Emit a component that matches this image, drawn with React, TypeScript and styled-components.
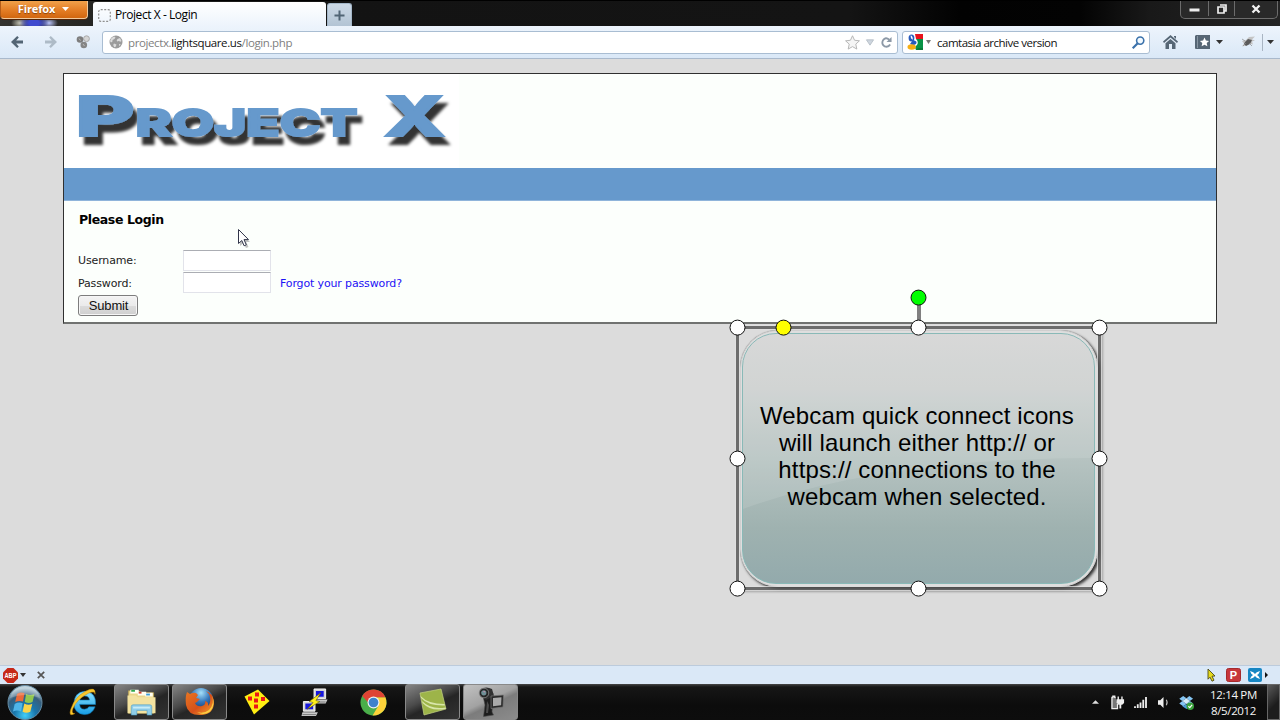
import React from "react";
import styled, { createGlobalStyle, css } from "styled-components";

const uiFont = `"Open Sans", "Noto Sans", sans-serif`;
const pageFont = `"DejaVu Sans", Verdana, sans-serif`;

const GlobalStyle = createGlobalStyle`
  * { box-sizing: border-box; }
  body { margin: 0; background: #dcdcdc; overflow: hidden; }
  svg { display: block; flex: none; overflow: visible; }
`;

const Desktop = styled.div`
  position: relative;
  display: flex;
  flex-direction: column;
  width: 1280px;
  height: 720px;
  overflow: hidden;
`;

/* ---------- Title bar ---------- */
const TitleBar = styled.header`
  display: flex;
  align-items: flex-start;
  height: 26px;
  background:
    radial-gradient(ellipse 15px 9px at 34px 22px, #3f4bcf 35%, transparent 100%),
    radial-gradient(ellipse 9px 6px at 20px 22px, #b9b9a9 10%, transparent 100%),
    radial-gradient(ellipse 9px 6px at 49px 22px, #aab4e6 10%, transparent 100%),
    linear-gradient(90deg, #34332f 0, #262623 90px, #131313 330px, #141414 850px, #020202 960px, #030303 1080px, #191919 1150px, #242424 1280px);
  border-top: 1px solid #000;
`;

const FirefoxButton = styled.button`
  display: flex;
  align-items: center;
  justify-content: center;
  gap: 7px;
  width: 88px;
  height: 18px;
  padding: 0 1px 2px 0;
  border: 1px solid #f1c99c;
  border-top: 0;
  border-left-color: #b45c17;
  border-radius: 0 0 4px 4px;
  background: linear-gradient(#f0a14b, #e37d25 55%, #d2660f);
  box-shadow: 0 1px 0 #4f2409;
  color: #fff;
  font: 700 11px/15px ${uiFont};
  letter-spacing: -0.15px;
  text-shadow: 0 1px 1px #8a4107;
`;

const Tab = styled.div`
  display: flex;
  align-items: center;
  width: 233px;
  height: 24px;
  margin: 1px 0 0 5px;
  padding: 2px 0 0 5px;
  gap: 4px;
  border-radius: 3px 3px 0 0;
  background: linear-gradient(#fff, #edf4fc);
  font: 12px/20px ${uiFont};
  letter-spacing: -0.44px;
  color: #000;
`;

const NewTab = styled.div`
  display: flex;
  align-items: center;
  justify-content: center;
  width: 25px;
  height: 23px;
  margin: 2px 0 0 1px;
  border: 1px solid #a4b7c9;
  border-bottom: 0;
  border-radius: 3px 3px 0 0;
  background: linear-gradient(#ccd9e6, #b3c4d4);
`;

const WindowControls = styled.div`
  display: flex;
  width: 98px;
  height: 18px;
  margin: 0 2px 0 auto;
  padding-bottom: 2px;
  border: 1px solid #6c6c6c;
  border-top: 0;
  border-radius: 0 0 5px 5px;
  background: #292929;
`;

const Control = styled.div<{ $w: number }>`
  display: flex;
  align-items: center;
  justify-content: center;
  width: ${(p) => p.$w}px;
  & + & { border-left: 1px solid #6c6c6c; }
`;

/* ---------- Navigation toolbar ---------- */
const NavBar = styled.nav`
  display: flex;
  align-items: center;
  height: 33px;
  background: linear-gradient(#edf4fc, #dae8f7);
  border-bottom: 1px solid #a9b9cc;
`;

const Slot = styled.div<{ $w: number }>`
  display: flex;
  align-items: center;
  justify-content: center;
  width: ${(p) => p.$w}px;
  height: 24px;
`;

const Field = styled.div<{ $w: number; $gap?: number }>`
  display: flex;
  align-items: center;
  width: ${(p) => p.$w}px;
  height: 23px;
  margin-right: ${(p) => p.$gap ?? 0}px;
  border: 1px solid #a9bdd2;
  border-radius: 3px;
  background: #fff;
  white-space: nowrap;
`;

const Address = styled.span`
  flex: 1;
  padding-top: 2px;
  font: 11.5px/20px ${uiFont};
  letter-spacing: -0.39px;
  color: #808080;
  b { color: #111; font-weight: 400; }
`;

const Query = styled.span`
  flex: 1;
  padding: 2px 0 0 6px;
  font: 11.5px/20px ${uiFont};
  letter-spacing: -0.49px;
  color: #111;
`;

const Divider = styled.div`
  width: 1px;
  height: 17px;
  background: #a9b5c3;
`;

/* ---------- Page ---------- */
const Viewport = styled.main`
  height: 606px;
  padding: 14px 63px 0;
  background: #dcdcdc;
`;

const Site = styled.section`
  width: 1154px;
  height: 251px;
  border: 1px solid #303030;
  border-bottom: 2px solid #707270;
  background: #fcfffc;
`;

const Masthead = styled.div`
  width: 395px;
  height: 94px;
  background: #fff;
`;

const BlueBand = styled.div`
  height: 33px;
  background: #6699cc;
  border-bottom: 1px solid #8fb4da;
`;

const LoginForm = styled.div`
  padding: 11px 0 0 14px;
  font: 11px/16px ${pageFont};
  letter-spacing: -0.14px;
  color: #222;
`;

const Heading = styled.h1`
  margin: 0 0 21px 1px;
  font: bold 12.5px/16px ${pageFont};
  letter-spacing: -0.38px;
  color: #000;
`;

const FormRow = styled.div`
  display: flex;
  align-items: center;
  height: 22.5px;
`;

const Label = styled.label`
  width: 104.5px;
  padding-top: 2px;
`;

const Input = styled.input`
  width: 88px;
  height: 21px;
  padding: 0;
  border: 1px solid #e2e3ea;
  border-top-color: #abadb3;
  background: #fff;
`;

const ForgotLink = styled.a`
  margin-left: 9.5px;
  padding-top: 2px;
  color: #1c12f5;
`;

const Submit = styled.button`
  display: block;
  width: 60px;
  height: 21px;
  margin: 1px 0 0;
  padding: 1px 0 0 1px;
  border: 1px solid #7d7d7d;
  border-radius: 3px;
  background: linear-gradient(#f3f3f3, #ebebeb 50%, #dcdcdc 51%, #cfcfcf);
  box-shadow: inset 0 0 0 1px #f6f6f6;
  font: 13px/18px "Liberation Sans", Arial, sans-serif;
  letter-spacing: -0.15px;
  color: #111;
`;

const Pointer = styled.div`
  position: absolute;
  left: 237px;
  top: 228px;
`;

/* ---------- Callout annotation ---------- */
const Callout = styled.div`
  position: absolute;
  left: 736px;
  top: 326px;
  width: 365px;
  height: 264px;
`;

const Plate = styled.div`
  position: absolute;
  inset: 4px 3px 3px 4px;
  border: 1px solid #cfcfcf;
  border-radius: 38px;
  background: #dedede;
  box-shadow: 2px 2px 3px #333, 0 0 1px #777;
`;

const Glass = styled.div`
  position: absolute;
  inset: 7px 6px 6px;
  display: flex;
  flex-direction: column;
  justify-content: center;
  overflow: hidden;
  border: 1px solid #89b9b7;
  border-radius: 34px;
  background: linear-gradient(#d4d4d4, #ccd0cf 22%, #b6c3c1 50%, #9fb2b0 78%, #93aaac);
`;

const Sheen = styled.svg`
  position: absolute;
  left: 0;
  top: 0;
`;

const Message = styled.p`
  position: relative;
  margin: 0;
  padding: 0 3px 6px 0;
  font: 24px/27px "Liberation Sans", Arial, sans-serif;
  letter-spacing: 0.14px;
  text-align: center;
  white-space: pre;
  color: #000;
`;

const Selection = styled.div`
  position: absolute;
  inset: 0;
  border: 3px solid rgba(80, 80, 80, 0.8);
  box-shadow: 0 0 0 1px rgba(225, 225, 225, 0.75), inset 0 0 0 1px rgba(225, 225, 225, 0.75),
    2px 2px 2px rgba(60, 60, 60, 0.35);
`;

const Stem = styled.div`
  position: absolute;
  left: 181px;
  top: -22px;
  width: 4px;
  height: 24px;
  background: #808080;
`;

const Handle = styled.div<{ $x: number; $y: number; $fill?: string }>`
  position: absolute;
  left: ${(p) => p.$x - 8}px;
  top: ${(p) => p.$y - 8}px;
  width: 16px;
  height: 16px;
  border: 1.4px solid #111;
  border-radius: 50%;
  background: ${(p) => p.$fill ?? "#fff"};
  transform: translate(-0.5px, -0.4px);
`;

/* ---------- Add-on bar ---------- */
const AddonBar = styled.div`
  display: flex;
  align-items: center;
  height: 19px;
  background: #dae8f7;
  border-top: 1px solid #bccbdc;
`;

const Spacer = styled.div`
  flex: 1;
`;

/* ---------- Taskbar ---------- */
const Taskbar = styled.footer`
  display: flex;
  height: 36px;
  background: linear-gradient(#4a4a4a 0, #333 1px, #161616 3px, #0c0c0c 60%, #0d0d0d);
`;

const TaskItem = styled.div<{ $w: number; $state?: "open" | "active" }>`
  display: flex;
  align-items: center;
  justify-content: center;
  width: ${(p) => p.$w}px;
  height: 36px;
  ${(p) =>
    p.$state &&
    css`
      margin-right: 3px;
      border: 1px solid #898989;
      border-radius: 3px;
      background: ${p.$state === "active"
        ? "linear-gradient(155deg, #c2c2c2, #a2a2a2 45%, #7c7c7c 56%, #8c8c8c)"
        : "linear-gradient(155deg, #858585, #4a4a4a 40%, #252525 56%, #333)"};
    `}
`;

const Clock = styled.div`
  width: 67px;
  padding-top: 3px;
  text-align: center;
  font: 11.5px/16px ${uiFont};
  letter-spacing: -0.35px;
  color: #f5f5f5;
  white-space: nowrap;
`;

const ShowDesktop = styled.div`
  width: 13px;
  border: 1px solid #676767;
  background: linear-gradient(135deg, #5a5a5a, #1d1d1d 60%);
`;

const Caret = ({ color = "#333", size = 7 }: { color?: string; size?: number }) => (
  <svg width={size} height={4} viewBox="0 0 8 4" preserveAspectRatio="none">
    <path d="M0 0h8L4 4z" fill={color} />
  </svg>
);

const Logo = () => (
  <svg width="395" height="94" viewBox="64 74 395 94">
    <defs>
      <filter id="logoShadow" x="-5%" y="-20%" width="110%" height="150%">
        <feDropShadow dx="5" dy="8" stdDeviation="1.5" floodColor="#000" floodOpacity=".8" />
      </filter>
    </defs>
    <g
      filter="url(#logoShadow)"
      fill="#6699cc"
      stroke="#6699cc"
      strokeWidth="2"
      strokeLinejoin="miter"
      fontFamily="Inter, 'Liberation Sans', sans-serif"
      fontWeight="800"
    >
      <text x="75.500" y="136" fontSize="54.500" textLength="59" lengthAdjust="spacingAndGlyphs">P</text>
      <text x="135.500" y="136" fontSize="37.500" textLength="222" lengthAdjust="spacingAndGlyphs">ROJECT</text>
      <text x="384" y="136" fontSize="54.500" textLength="61" lengthAdjust="spacingAndGlyphs">X</text>
    </g>
  </svg>
);

const Arrow = ({ color, flip }: { color: string; flip?: boolean }) => (
  <svg width="12" height="12" viewBox="0 0 12 12">
    <g transform={flip ? "translate(12 0) scale(-1 1)" : undefined}>
      <path d="M6.200 0L7.800 1.600 5.200 4.400H12v3.200H5.200l2.600 2.800L6.200 12 0 6z" fill={color} />
    </g>
  </svg>
);

const Globe = () => (
  <svg width="14" height="14" viewBox="0 0 14 14">
    <circle cx="7" cy="7" r="6.500" fill="#9b9b9b" />
    <path d="M2.500 3l2.500-1.500 1.500.8-1 1.700-2 1v1.500L2 7.500 1 6zM8.500 4l2.500-1 1.500 3-1 .7-1.700-.7-1.600.5-.5-1zM5 8.500l2.500 1-.8 2.200-1.500.5L4.200 10zM10 9l1.800.2-1.800 2z" fill="#dcdcdc" />
  </svg>
);

const GoogleIcon = () => (
  <svg width="16" height="16" viewBox="0 0 16 16">
    <path d="M8 0h8v5H9z" fill="#e8121c" />
    <path d="M9 5h7v11H9q-2-3 1-5 2-3-1-6z" fill="#089246" />
    <path d="M9 16l2-2h5v2z" fill="#0a7a38" />
    <ellipse cx="4.500" cy="4" rx="2.900" ry="3.600" fill="#2659bd" />
    <path d="M6 6q5 1 3 4-3 2-6 0z" fill="#2659bd" />
    <path d="M3.700 1.200q2.500 1 2 4.500-2.300-1-2-4.500z" fill="#fff" />
    <ellipse cx="4.700" cy="13" rx="4.200" ry="2.800" fill="#f6ae13" />
  </svg>
);

const Tray = {
  plug: (
    <svg width="14" height="15" viewBox="0 0 15 15">
      <path d="M5 2H4V.8H2V2H1v12h6V9" fill="#777" stroke="#eee" strokeWidth="1.400" />
      <path d="M6 4h8v4l-2 2h-1v4H9v-4H8L6 8zM7 1h1.500v3H7zM11 1h1.500v3H11z" fill="#eee" />
    </svg>
  ),
  signal: (
    <svg width="13" height="11" viewBox="0 0 14 12">
      <path d="M0 10h2v2H0zM3 8h2v4H3zM6 6h2v6H6zM9 3h2v9H9zM12 0h2v12h-2z" fill="#eee" />
    </svg>
  ),
  speaker: (
    <svg width="11" height="13" viewBox="0 0 12 14">
      <path d="M0 4.500h2.500L6 1v12L2.500 9.500H0z" fill="#eee" />
      <path d="M9 4q2 3 0 6" stroke="#bbb" fill="none" strokeWidth="1.200" />
    </svg>
  ),
  dropbox: (
    <svg width="15" height="15" viewBox="0 0 16 16">
      <path d="M4.500 1L8 3.500 3.500 6.500.3 4zM11 1l4 3-3.500 2.500L8 3.500zM3.500 6.500L8 9.500 4.500 12 .3 9zM11.500 6.500l3.700 2.500L11 12 8 9.500z" fill="#84c5f3" />
      <path d="M8 3.500l3.500 3L8 9.500l-4.500-3z" fill="#d7eefc" />
      <path d="M3.500 12L8 10l3 2.500L8 15z" fill="#4d9edb" />
      <circle cx="12" cy="12" r="4" fill="#3aa23b" />
      <path d="M10 12l1.500 1.500L14 10.500" stroke="#fff" fill="none" strokeWidth="1.200" />
    </svg>
  ),
};

const StartOrb = () => (
  <svg width="38" height="36" viewBox="0 0 38 36">
    <defs>
      <radialGradient id="orb" cx="50%" cy="88%" r="80%">
        <stop offset="0" stopColor="#42cef8" />
        <stop offset=".4" stopColor="#1976ac" />
        <stop offset=".75" stopColor="#365e7c" />
        <stop offset="1" stopColor="#b1c9d5" />
      </radialGradient>
    </defs>
    <circle cx="19" cy="18.500" r="17" fill="url(#orb)" stroke="#668da5" />
    <path d="M11 10q4-2.500 7.500-.7L17 17.500q-4-1.500-7.800.6z" fill="#e9693a" />
    <path d="M20 10q4 2 8.500 0l-2 8q-3.500 2-7.700 0z" fill="#91c750" />
    <path d="M8.700 20q4-2.500 8-.8L15 27.500q-4-2-8 0z" fill="#4fb5e9" />
    <path d="M18.300 19.500q4 2.200 8 .3l-2 8q-4 2-7.700 0z" fill="#fad449" />
    <path d="M4 14Q8 2 19 2t15 12q-15-6-30 0z" fill="#fff" opacity=".22" />
  </svg>
);

const IeIcon = () => (
  <svg width="29" height="30" viewBox="0 0 30 30">
    <defs>
      <linearGradient id="ie" x1="0" y1="0" x2="0" y2="1">
        <stop stopColor="#8fe3ff" />
        <stop offset="1" stopColor="#169de5" />
      </linearGradient>
    </defs>
    <path d="M27.500 17.500H11q.5 5 5 5 3.500 0 4.500-2.500h6.500Q24 28 16 28 5 27 5 16 6 5 16 4q12 .5 11.500 13.500zM11.200 13h10q-.5-4.200-5-4.200t-5 4.200z" fill="url(#ie)" stroke="#0c7dbb" strokeWidth=".6" />
    <path d="M6 27Q-1 31 2 22 6 10 17 4q11-6 10 3 0-4-7-1Q8 12 4 22q-2 5 2 5z" fill="#f9c72c" stroke="#c48d09" strokeWidth=".5" />
  </svg>
);

const ExplorerIcon = () => (
  <svg width="31" height="28" viewBox="0 0 32 30">
    <path d="M2 3h11l2 2h14v22H2z" fill="#ead68a" stroke="#b89f4f" strokeWidth=".7" />
    <path d="M4 2h9v4H4zM12 4h9v4h-9zM20 5h8v4h-8z" fill="#fffef2" />
    <path d="M5 2h4v2H5z" fill="#2fa84c" />
    <path d="M13 4h3v2h-3z" fill="#d0402f" />
    <path d="M21 6h4v2h-4z" fill="#3d9dd8" />
    <path d="M1 8h9l2 2h19v17H1z" fill="#f3e2a0" />
    <path d="M5 29V20q0-2 2-2h18q2 0 2 2v9h-5v-5H11v5z" fill="#8fcde9" stroke="#4a98c0" strokeWidth=".6" />
    <path d="M7 20h18v2H7z" fill="#c7ecf8" />
  </svg>
);

const FirefoxIcon = () => (
  <svg width="30" height="30" viewBox="0 0 30 30">
    <defs>
      <radialGradient id="fxGlobe" cx="50%" cy="20%" r="75%">
        <stop stopColor="#a5e0fa" />
        <stop offset=".5" stopColor="#3677bb" />
        <stop offset="1" stopColor="#15325f" />
      </radialGradient>
      <linearGradient id="fox" x1="0" y1="0" x2="1" y2="1">
        <stop stopColor="#e87722" />
        <stop offset=".55" stopColor="#d7511a" />
        <stop offset="1" stopColor="#f5a62f" />
      </linearGradient>
    </defs>
    <circle cx="16" cy="13" r="12" fill="url(#fxGlobe)" />
    <path d="M2 5l3 2q3-2 6-1l2 2-2 3 4 1-3 3-2 1q2 4 7 3 4-1 3-5 4 1 3 5 3-3 2-9-1-4-4-6 7 2 8 11 0 12-12 13Q3 29 1 18 0 10 2 5z" fill="url(#fox)" />
    <path d="M27 8q3 9-3 15-5 4-12 2 7 4 13-.5Q31 18 27 8z" fill="#fad143" />
  </svg>
);

const DiceIcon = () => (
  <svg width="26" height="26" viewBox="0 0 26 26">
    <path d="M0.500 7.500L14 .5 25.500 12 10 25.500z" fill="#ffee12" />
    <path d="M11 3.500h4v4h-4zM4 7.500h4v4H4zM17 8h4v4h-4zM10 9.500h4v4h-4zM10 15.500h4v4h-4z" fill="#eb1717" />
  </svg>
);

const PuttyIcon = () => (
  <svg width="28" height="29" viewBox="0 0 28 30">
    <path d="M13 1h12v10H13zM2 14h12v10H2z" fill="#d3d3d3" stroke="#f5f5f5" />
    <path d="M15 3h8v6h-8zM4 16h8v6H4z" fill="#1717df" />
    <path d="M13 12h14l-2 4H14zM1 25h16l-2 4H0z" fill="#c9c9c9" />
    <path d="M14 14.500h11M1 27.500h14" stroke="#777" />
    <path d="M20 5L8 14l4 1-6 7 13-8-4-1z" fill="#ffee1b" stroke="#5d5700" strokeWidth=".6" />
  </svg>
);

const ChromeIcon = () => (
  <svg width="27" height="27" viewBox="0 0 28 28">
    <circle cx="14" cy="14" r="13.500" fill="#4aae4a" />
    <path d="M14 8.500h12.300A13.500 13.500 0 0113 27.500l6-10z" fill="#fcd23a" />
    <path d="M2.300 7.300A13.500 13.500 0 0126.300 8.500H14q-4 .5-5.500 5.500z" fill="#df4334" />
    <circle cx="14" cy="14" r="6.200" fill="#f2f2f2" />
    <circle cx="14" cy="14" r="5" fill="#3d82cc" />
  </svg>
);

const CamtasiaIcon = () => (
  <svg width="28" height="28" viewBox="0 0 28 28">
    <path d="M1 5L22 1l5 20-22 6z" fill="#9db449" stroke="#c4d384" strokeWidth=".7" />
    <path d="M1.500 8Q9 16 25.500 16l.4 1.500Q9 18 2.200 10zM3 13q9 9 23.500 6.500l.3 1.200Q12 24 3.600 15z" fill="#dfebb5" opacity=".9" />
  </svg>
);

const CamcorderIcon = () => (
  <svg width="26" height="30" viewBox="0 0 26 30">
    <path d="M5 9l10-3-1 19 1.500 3-10 1.500L7 18z" fill="#1d1d1d" stroke="#4a4a4a" strokeWidth=".6" />
    <path d="M3 2q5-3 11 0l2 7-8 4-5-4z" fill="#303030" />
    <circle cx="6" cy="6" r="4.800" fill="#252525" stroke="#8b8b8b" strokeWidth=".8" />
    <circle cx="5.800" cy="5.800" r="2.600" fill="#6f8f96" />
    <path d="M5 4.500l1.500-.5.5 1.500z" fill="#e78ab0" />
    <path d="M13 9l12.500-1-.5 12-12 1.500z" fill="#292929" stroke="#777" strokeWidth=".7" />
    <path d="M15 11l8.500-.8-.4 8-8.100 1z" fill="#a9a9a9" />
    <path d="M9 14l2 4-1 8H8z" fill="#4c4c4c" />
  </svg>
);

const NavigationBar = () => (
  <NavBar>
    <Slot $w={34}><Arrow color="#536574" /></Slot>
    <Slot $w={33}><Arrow color="#aebbc7" flip /></Slot>
    <Slot $w={32}>
      <svg width="14" height="14" viewBox="0 0 14 14">
        <circle cx="10.500" cy="3.700" r="2.900" fill="#d5d5d5" stroke="#aaa" />
        <circle cx="4" cy="4.500" r="3.300" fill="#7d7d7d" />
        <circle cx="7.800" cy="10" r="3.300" fill="#858585" />
        <path d="M3 3.500l1.500 2M7 9l1.500 2" stroke="#b9b9b9" />
      </svg>
    </Slot>
    <Slot $w={3} />
    <Field $w={796} $gap={4}>
      <Slot $w={25}><Globe /></Slot>
      <Address>projectx.<b>lightsquare.us</b>/login.php</Address>
      <Slot $w={16}>
        <svg width="15" height="15" viewBox="0 0 16 16">
          <path d="M8 .8l2.200 4.800 5.200.6-3.900 3.500 1.100 5.300L8 12.400 3.400 15l1.100-5.300L.6 6.200l5.200-.6z" fill="#f5f5f5" stroke="#b3b3b3" />
        </svg>
      </Slot>
      <Slot $w={20}>
        <svg width="8" height="7" viewBox="0 0 9 7"><path d="M.5.5h8l-4 6z" fill="#ced6df" stroke="#b4bdc6" /></svg>
      </Slot>
      <Slot $w={13}>
        <svg width="11" height="11" viewBox="0 0 12 12">
          <path d="M9 3Q5-.5 2.200 3.500 0 8 4 10.300q4 1.200 6-2" fill="none" stroke="#8d99a7" strokeWidth="2" />
          <path d="M11.500 0v5.500H6z" fill="#8d99a7" />
        </svg>
      </Slot>
      <Slot $w={4} />
    </Field>
    <Field $w={248}>
      <Slot $w={23}><GoogleIcon /></Slot>
      <Caret color="#777" size={5} />
      <Query>camtasia archive version</Query>
      <Slot $w={22}>
        <svg width="13" height="13" viewBox="0 0 13 13">
          <path d="M.7 12.300l5-5" stroke="#3b72ab" strokeWidth="2.200" />
          <circle cx="8.200" cy="4.600" r="3.600" fill="#f3faff" stroke="#3b72ab" strokeWidth="1.600" />
        </svg>
      </Slot>
    </Field>
    <Slot $w={40}>
      <svg width="15" height="14" viewBox="0 0 15 14">
        <path d="M7.500 0L15 6.500 14 8 7.500 2.500 1 8 0 6.500z" fill="#566675" />
        <path d="M2.500 8.200l5-4.200 5 4.200V14H9V9H6v5H2.500z" fill="#566675" />
        <path d="M11 1h2v3l-2-2z" fill="#566675" />
      </svg>
    </Slot>
    <Slot $w={26}>
      <svg width="16" height="14" viewBox="0 0 16 14">
        <path d="M1 0h14v14H1q-1 0-1-1V1z" fill="#566675" />
        <path d="M2.500 1v12" stroke="#8795a2" />
        <path d="M9.500 2.500l1.400 3 3.200.4-2.400 2.200.7 3.200-2.900-1.600-2.900 1.600.7-3.200-2.400-2.200 3.200-.4z" fill="#fff" />
      </svg>
    </Slot>
    <Caret />
    <Slot $w={12} />
    <Slot $w={27}>
      <svg width="15" height="12" viewBox="0 0 15 12">
        <path d="M1 5l4-1 3-3 6-.5-3 3 3 1-3 1 1 3-4-1-3 2-4 1 2-3z" fill="#c4c4c4" />
        <path d="M4 6l3-3 4 1-2 4-4 2-2-2z" fill="#5a5a5a" />
        <path d="M2 10l3-3M1 3l3 2M11 10L8 7" stroke="#888" strokeWidth=".7" />
      </svg>
    </Slot>
    <Divider />
    <Slot $w={15}><Caret /></Slot>
  </NavBar>
);

export default function App() {
  return (
    <Desktop>
      <GlobalStyle />
      <TitleBar>
        <FirefoxButton>Firefox <Caret color="#fff" size={7} /></FirefoxButton>
        <Tab>
          <svg width="13" height="13" viewBox="0 0 13 13">
            <rect x=".7" y=".7" width="11.600" height="11.600" rx="2" fill="none" stroke="#8f8f8f" strokeWidth="1.200" strokeDasharray="2 1.500" />
          </svg>
          Project X - Login
        </Tab>
        <NewTab>
          <svg width="11" height="11" viewBox="0 0 11 11"><path d="M5.500.5v10M.5 5.500h10" stroke="#516575" strokeWidth="2" /></svg>
        </NewTab>
        <WindowControls>
          <Control $w={27}><svg width="11" height="5" viewBox="0 0 11 5"><path d="M.5 2.500h10v3H.5z" fill="#eee" /></svg></Control>
          <Control $w={26}>
            <svg width="10" height="10" viewBox="0 0 10 10"><path d="M3 1h6v6H7M1 3h6v6H1z" fill="none" stroke="#eee" strokeWidth="1.700" /></svg>
          </Control>
          <Control $w={43}>
            <svg width="9" height="8" viewBox="0 0 9 8"><path d="M.5 .5l7 7M7.500 .5l-7 7" stroke="#f2f2f2" strokeWidth="2.300" /></svg>
          </Control>
        </WindowControls>
      </TitleBar>
      <NavigationBar />
      <Viewport>
        <Site>
          <Masthead><Logo /></Masthead>
          <BlueBand />
          <LoginForm>
            <Heading>Please Login</Heading>
            <FormRow><Label>Username:</Label><Input /></FormRow>
            <FormRow><Label>Password:</Label><Input type="password" /><ForgotLink>Forgot your password?</ForgotLink></FormRow>
            <Submit>Submit</Submit>
          </LoginForm>
        </Site>
      </Viewport>
      <AddonBar>
        <Slot $w={20}>
          <svg width="15" height="15" viewBox="0 0 15 15">
            <path d="M4.500 0h6L15 4.500v6L10.500 15h-6L0 10.500v-6z" fill="#c62818" />
            <text x="7.500" y="10.300" textAnchor="middle" fontFamily="Liberation Sans, sans-serif" fontWeight="700" fontSize="7.500" textLength="12" lengthAdjust="spacingAndGlyphs" fill="#fff">ABP</text>
          </svg>
        </Slot>
        <Caret size={6} />
        <Slot $w={30}>
          <svg width="8" height="8" viewBox="0 0 8 8"><path d="M.8.8l6.400 6.400M7.200.8L.8 7.200" stroke="#555" strokeWidth="1.700" /></svg>
        </Slot>
        <Spacer />
        <Slot $w={22}>
          <svg width="10" height="14" viewBox="0 0 10 14"><path d="M2 1l7 7-3 .2 2 4-2 1-2-4-2 2z" fill="#e5d91c" stroke="#4d4a16" strokeWidth=".9" /></svg>
        </Slot>
        <Slot $w={23}>
          <svg width="15" height="14" viewBox="0 0 15 14">
            <rect x=".5" y=".5" width="14" height="13" rx="2" fill="#c7373b" stroke="#a52a2d" />
            <text x="7.500" y="11" textAnchor="middle" fontFamily="Liberation Sans, sans-serif" fontWeight="700" fontSize="11" fill="#fff">P</text>
          </svg>
        </Slot>
        <Slot $w={20}>
          <svg width="14" height="14" viewBox="0 0 14 14">
            <rect width="14" height="14" rx="2" fill="#1686c3" />
            <path d="M2 3q4 1 5 3 1-2 5-3-1 3-3 4 2 1 3 4-4-1-5-3-1 2-5 3 1-3 3-4-2-1-3-4z" fill="#fff" />
          </svg>
        </Slot>
        <svg width="3" height="6" viewBox="0 0 3 6"><path d="M0 0l3 3-3 3z" fill="#111" /></svg>
        <Slot $w={12} />
      </AddonBar>
      <Taskbar>
        <TaskItem $w={50}><StartOrb /></TaskItem>
        <Slot $w={3} />
        <TaskItem $w={61}><IeIcon /></TaskItem>
        <TaskItem $w={55} $state="open"><ExplorerIcon /></TaskItem>
        <TaskItem $w={55} $state="open"><FirefoxIcon /></TaskItem>
        <TaskItem $w={54}><DiceIcon /></TaskItem>
        <TaskItem $w={62}><PuttyIcon /></TaskItem>
        <TaskItem $w={55}><ChromeIcon /></TaskItem>
        <Slot $w={4} />
        <TaskItem $w={55} $state="open"><CamtasiaIcon /></TaskItem>
        <TaskItem $w={55} $state="active"><CamcorderIcon /></TaskItem>
        <Spacer />
        <TaskItem $w={22}><svg width="7" height="4" viewBox="0 0 8 4"><path d="M0 4l4-4 4 4z" fill="#ddd" /></svg></TaskItem>
        <TaskItem $w={23}>{Tray.plug}</TaskItem>
        <TaskItem $w={23}>{Tray.signal}</TaskItem>
        <TaskItem $w={22}>{Tray.speaker}</TaskItem>
        <TaskItem $w={24}>{Tray.dropbox}</TaskItem>
        <Slot $w={2} />
        <Clock>12:14 PM<br />8/5/2012</Clock>
        <ShowDesktop />
      </Taskbar>

      <Pointer>
        <svg width="14" height="22" viewBox="0 0 14 22">
          <path d="M3 4v14l3.500-3 2.500 5 2.500-1-2.300-5H13z" fill="#777" opacity=".45" />
          <path d="M1.500 1.500v14l3.300-3 2.300 5.300 2.200-1-2.300-5.200h4.500z" fill="#fff" stroke="#31354a" />
        </svg>
      </Pointer>

      <Callout>
        <Plate />
        <Glass>
          <Sheen width="352" height="252" viewBox="0 0 352 252">
            <path d="M0 175Q140 124 352 124V0H0z" fill="#fff" opacity=".1" />
          </Sheen>
          <Message>{"Webcam quick connect icons\nwill launch either http:// or\nhttps:// connections to the\nwebcam when selected."}</Message>
        </Glass>
        <Selection />
        <Stem />
        <Handle $x={183} $y={-28} $fill="#00ff00" />
        <Handle $x={2} $y={2} />
        <Handle $x={47.5} $y={2} $fill="#ffff00" />
        <Handle $x={183} $y={2} />
        <Handle $x={364} $y={2} />
        <Handle $x={2} $y={132.5} />
        <Handle $x={364} $y={132.5} />
        <Handle $x={2} $y={263} />
        <Handle $x={183} $y={263} />
        <Handle $x={364} $y={263} />
      </Callout>
    </Desktop>
  );
}
